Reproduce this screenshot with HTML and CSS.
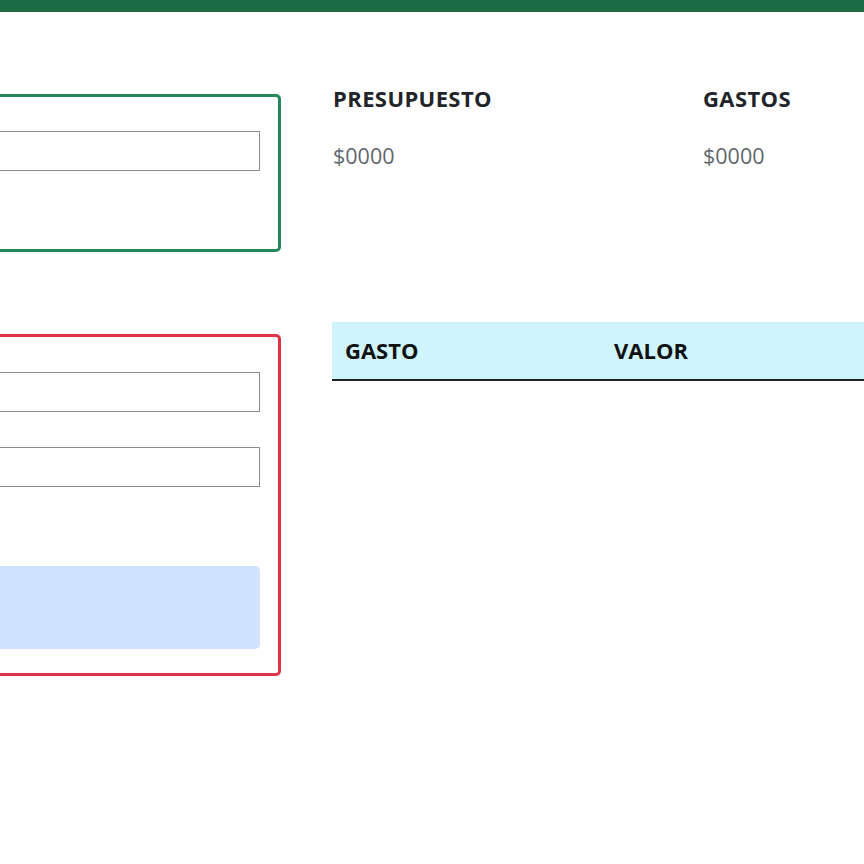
FILE: index.html
```html
<!DOCTYPE html>
<html lang="es">
<head>
<meta charset="utf-8">
<title>Presupuesto</title>
<link rel="stylesheet" href="styles.css">
</head>
<body>
<header class="topbar"></header>
<main class="layout">
  <section class="forms">
    <form class="card card-budget">
      <div class="field field-first">
        <input class="input" type="text" aria-label="Presupuesto">
      </div>
    </form>
    <form class="card card-expense">
      <div class="field field-first">
        <input class="input" type="text" aria-label="Gasto">
      </div>
      <div class="field field-second">
        <input class="input" type="text" aria-label="Valor">
      </div>
      <button class="btn-add" type="button" aria-label="Agregar"></button>
    </form>
  </section>
  <section class="summary">
    <div class="stats">
      <div class="stat">
        <h5 class="stat-title">PRESUPUESTO</h5>
        <p class="stat-value">$0000</p>
      </div>
      <div class="stat">
        <h5 class="stat-title">GASTOS</h5>
        <p class="stat-value">$0000</p>
      </div>
    </div>
    <table class="expenses">
      <thead>
        <tr>
          <th class="col-name">GASTO</th>
          <th class="col-value">VALOR</th>
          <th class="col-extra"></th>
        </tr>
      </thead>
      <tbody></tbody>
    </table>
  </section>
</main>
</body>
</html>
```
FILE: styles.css
```css
* { box-sizing: border-box; }

html, body {
  margin: 0;
  padding: 0;
  background: #ffffff;
  overflow: hidden;
}

body {
  width: 864px;
  height: 864px;
  font-family: "Open Sans", "Noto Sans", sans-serif;
  font-size: 21px;
  line-height: 1.5;
  color: #212529;
}

.topbar {
  height: 12px;
  background: #1e6c46;
}

.layout {
  display: grid;
  grid-template-columns: 401px 800px;
  column-gap: 51px;
  margin-left: -120px;
  align-items: start;
}

.forms {
  display: flex;
  flex-direction: column;
  gap: 82px;
  margin-top: 82px;
}

.card {
  border: 3px solid #198754;
  border-radius: 5px;
  padding: 18px;
  display: flex;
  flex-direction: column;
}

.card-budget {
  border-color: #23875a;
  padding-bottom: 78px;
}

.card-budget .field-first { margin-top: 16px; }

.card-expense {
  border-color: #dc3545;
  padding-bottom: 24px;
}

.card-expense .field-first { margin-top: 17px; }
.field-second { margin-top: 35px; }

.input {
  display: block;
  width: 100%;
  height: 40px;
  border: 1px solid #8d8d8d;
  border-radius: 0;
  background: #fff;
  font: inherit;
}

.btn-add {
  margin-top: 79px;
  height: 83px;
  border: none;
  border-radius: 5px;
  background: #cfe2ff;
}

.summary {
  margin-top: 70px;
}

.stats {
  display: grid;
  grid-template-columns: 370px 370px;
}

.stat-title {
  margin: 0;
  font-size: 22px;
  font-weight: 700;
  line-height: 33px;
  letter-spacing: 0.4px;
  color: #212529;
  padding-left: 1px;
}

.stat-value {
  margin: 25px 0 0;
  font-size: 21.5px;
  line-height: 32px;
  color: #5f666d;
  padding-left: 1px;
}

.expenses {
  margin-top: 150px;
  width: 780px;
  border-collapse: collapse;
}

.expenses th {
  background: #cff4fc;
  color: #111;
  text-align: left;
  font-weight: 700;
  font-size: 22px;
  line-height: 33px;
  padding: 12px 13px;
  border-bottom: 2px solid #222;
}

.col-name { width: 269px; }
.col-value { width: 269px; }
```
